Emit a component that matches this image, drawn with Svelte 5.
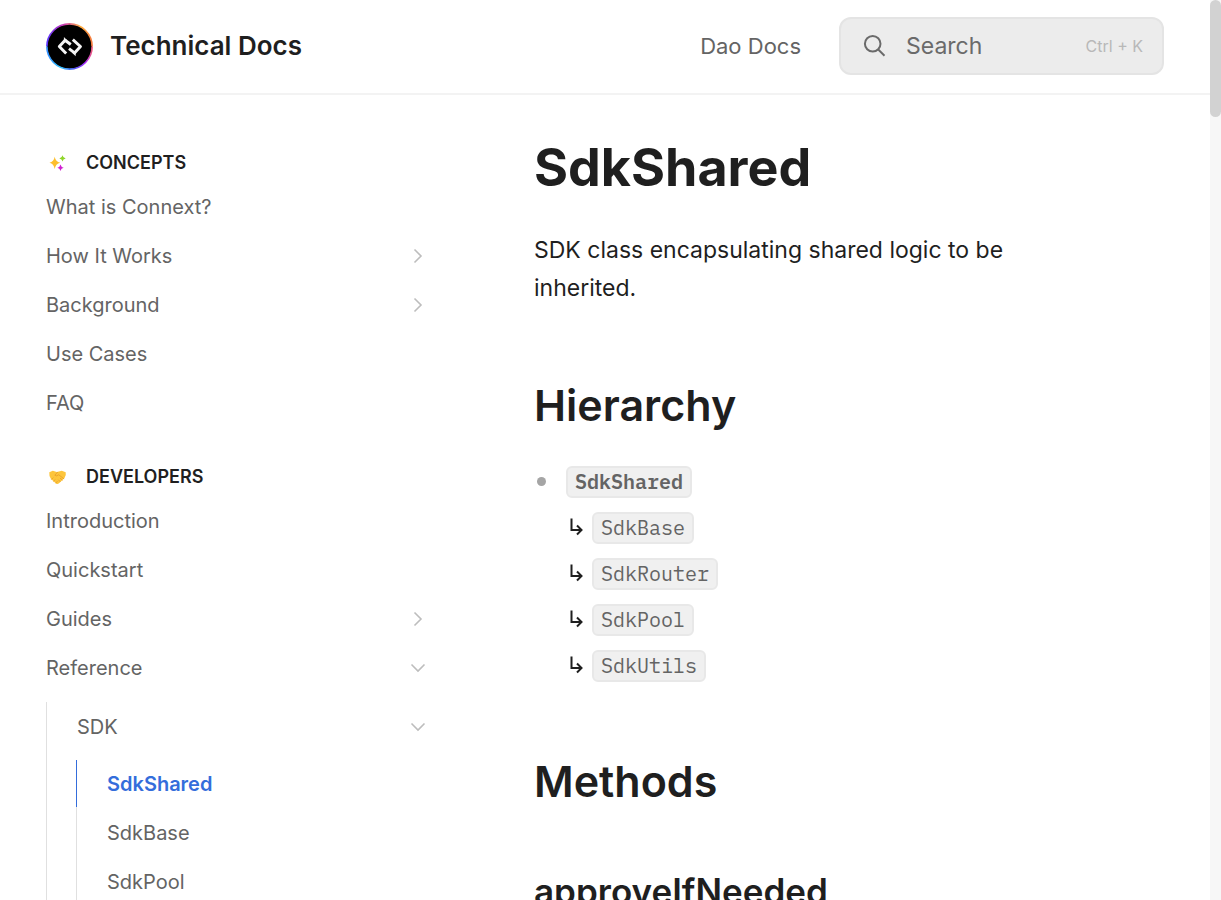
<script>
  const concepts = [
    { label: 'What is Connext?' },
    { label: 'How It Works', more: true },
    { label: 'Background', more: true },
    { label: 'Use Cases' },
    { label: 'FAQ' }
  ];
  const developers = [
    { label: 'Introduction' },
    { label: 'Quickstart' },
    { label: 'Guides', more: true },
    { label: 'Reference', more: true, open: true }
  ];
  const sdkPages = ['SdkShared', 'SdkBase', 'SdkPool'];
  const children = ['SdkBase', 'SdkRouter', 'SdkPool', 'SdkUtils'];
</script>

{#snippet chevron(open)}
  <svg class="chevron" class:open viewBox="0 0 20 20" aria-hidden="true">
    <path d="M6.5 3.5 13 10l-6.5 6.5" />
  </svg>
{/snippet}

{#snippet row(item)}
  <a class="row" href="#top">
    <span>{item.label}</span>
    {#if item.more}{@render chevron(item.open)}{/if}
  </a>
{/snippet}

<div class="page" id="top">
  <header>
    <a class="brand" href="#top">
      <svg class="logo" viewBox="0 0 48 48" aria-hidden="true">
        <defs>
          <linearGradient id="ring-top" x1="0" y1="0" x2="1" y2="0">
            <stop offset="0" stop-color="#5a35ff" />
            <stop offset=".35" stop-color="#c837b8" />
            <stop offset=".75" stop-color="#ffad3d" />
            <stop offset="1" stop-color="#f5793d" />
          </linearGradient>
          <linearGradient id="ring-bottom" x1="0" y1="0" x2="1" y2="0">
            <stop offset="0" stop-color="#318dff" />
            <stop offset=".3" stop-color="#35c5ff" />
            <stop offset=".6" stop-color="#4b59ee" />
            <stop offset=".85" stop-color="#a92cff" />
            <stop offset="1" stop-color="#ed5a78" />
          </linearGradient>
        </defs>
        <circle cx="24" cy="24" r="23" fill="#000" />
        <path d="M.9 24a23.1 23.1 0 0 1 46.2 0" fill="none" stroke="url(#ring-top)" stroke-width="1.7" />
        <path d="M.9 24a23.1 23.1 0 0 0 46.2 0" fill="none" stroke="url(#ring-bottom)" stroke-width="1.7" />
        <g fill="none" stroke="#f4f4f4" stroke-width="3" stroke-linejoin="round">
          <path d="M20.6 31.2 13.600 24l5.900-6.400 5.800 4.400" />
          <path d="M27.400 17 35.200 24l-6.100 6.600-5.600-4.400" />
        </g>
        <path d="M18.300 14.300 21.500 17.600 18.300 20.500ZM30.300 34 27 30.600 30.300 27.800Z" fill="#f4f4f4" />
      </svg>
      <span>Technical Docs</span>
    </a>
    <nav class="top-links" aria-label="Main"><a href="#top">Dao Docs</a></nav>
    <button class="search" type="button">
      <svg viewBox="0 0 24 24" aria-hidden="true">
        <circle cx="9.7" cy="9.7" r="7.8" /><path d="m15.500 15.700 6 6" />
      </svg>
      <span>Search</span>
      <kbd>Ctrl + K</kbd>
    </button>
  </header>

  <div class="body">
    <nav class="sidebar" aria-label="Pages">
      <section>
        <h2>
          <svg viewBox="0 0 20 20" aria-hidden="true">
            <path fill="#fdbf2d" d="M6.700 3.700Q7.600 8.800 12.200 9.800 7.600 10.900 6.700 16 5.800 10.900 1.500 9.800 5.800 8.800 6.700 3.700Z" />
            <path fill="#8fd62a" d="M14.500 2.200q.5 2.600 3.200 3.200-2.700.6-3.200 3.200-.5-2.600-3.200-3.200 2.700-.6 3.200-3.200Z" />
            <path fill="#cf1fd0" d="M12.500 11.500q.5 2.600 3.200 3.200-2.700.6-3.200 3.200-.5-2.600-3.200-3.200 2.700-.6 3.200-3.200Z" />
          </svg>
          CONCEPTS
        </h2>
        {#each concepts as item}{@render row(item)}{/each}
      </section>
      <section>
        <h2>
          <svg viewBox="0 0 20 20" aria-hidden="true">
            <path fill="#fdc53c" d="M1.300 5.200 4.800 3.800l4 1.200 5-1.200 3.900 1.400q.8 3.300-1.300 6L11 16.300q-1.500 1.300-3 .2L3 12Q.8 8.500 1.300 5.200Z" />
            <path fill="none" stroke="#e9a02c" stroke-width=".9" stroke-linecap="round" d="M9.500 5.300 6.800 8.200q1.700 1.500 4-.4l5 3.900M3.600 12.300l1.400-1.400M5.600 14.200l1.500-1.500M8 15.900l1.200-1.400M12.300 11.300l1.900 1.800M10.600 13l1.500 1.600" />
          </svg>
          DEVELOPERS
        </h2>
        {#each developers as item}{@render row(item)}{/each}
        <div class="branch">
          {@render row({ label: 'SDK', more: true, open: true })}
          <div class="leaves">
            {#each sdkPages as page, i}
              <a class="leaf" class:current={i === 0} href="#top">{page}</a>
            {/each}
          </div>
        </div>
      </section>
    </nav>

    <main>
      <h1>SdkShared</h1>
      <p class="lead">SDK class encapsulating shared logic to be inherited.</p>
      <h2>Hierarchy</h2>
      <ul>
        <li>
          <div class="entry"><code class="strong">SdkShared</code></div>
          {#each children as name}
            <div class="entry">
              <svg viewBox="0 0 20 24" aria-label="extended by" role="img">
                <path d="M5.500 2.500V14H15M11 9.500 15.500 14 11 18.500" />
              </svg>
              <code>{name}</code>
            </div>
          {/each}
        </li>
      </ul>
      <h2>Methods</h2>
      <h3>approveIfNeeded</h3>
    </main>
  </div>
  <div class="scroll-track" aria-hidden="true"><div class="scroll-thumb"></div></div>
</div>

<style>
  :global(body) { margin: 0; background: #fff; }
  * { box-sizing: border-box; }
  .page {
    height: 100vh;
    overflow: hidden;
    padding-right: 11px;
    color: #1f1f1f;
    font-family: Inter, "Liberation Sans", sans-serif;
  }
  a { color: inherit; text-decoration: none; }
  header {
    display: flex;
    align-items: center;
    padding: 17px 46px 18px;
    border-bottom: 2px solid #f3f3f3;
  }
  .brand {
    display: flex;
    align-items: center;
    gap: 17px;
    font-size: 26px;
    line-height: 36px;
    font-weight: 600;
  }
  .logo { width: 47px; height: 47px; }
  .top-links { margin-left: auto; margin-right: 38px; font-size: 22px; color: #646464; }
  .search {
    display: flex;
    align-items: center;
    width: 325px;
    height: 58px;
    padding: 0 19px 0 22px;
    border: 2px solid #e4e4e4;
    border-radius: 12px;
    background: #ececec;
    color: #6a6a6a;
    font: inherit;
    font-size: 23px;
  }
  .search svg { width: 24px; height: 24px; margin-right: 19px; fill: none; stroke: currentColor; stroke-width: 2; }
  kbd { margin-left: auto; font: inherit; font-size: 16px; color: #b8b8b8; }

  .body { display: flex; align-items: flex-start; }
  .sidebar { flex: 0 0 440px; padding: 49px 0 0 46px; }
  section { padding-bottom: 31px; }
  section h2 {
    display: flex;
    align-items: center;
    gap: 18px;
    margin: 0;
    height: 38px;
    font-size: 18px;
    line-height: 24px;
    font-weight: 600;
  }
  section h2 svg { width: 20px; height: 20px; margin-left: 2px; }
  .row, .leaf {
    display: flex;
    align-items: center;
    justify-content: space-between;
    height: 49px;
    padding-right: 12px;
    color: #646464;
    font-size: 20px;
    line-height: 28px;
  }
  .chevron { width: 20px; height: 20px; fill: none; stroke: #bdbdbd; stroke-width: 1.6; }
  .open { transform: rotate(90deg); }
  .branch { margin-top: 10px; padding-left: 30px; border-left: 1px solid #e0e0e0; }
  .leaves { display: grid; gap: 2px; margin: 9px 0 0 -1px; background: linear-gradient(#e0e0e0, #e0e0e0) left / 1px 100% no-repeat; }
  .leaf { height: 47px; padding-left: 30px; border-left: 1px solid #e0e0e0; }
  .leaf.current { border-left-color: #346ddb; color: #346ddb; font-weight: 600; }

  main { flex: 1; min-width: 0; padding: 39px 124px 0 94px; }
  h1 { margin: 0; font-size: 52px; line-height: 68px; font-weight: 700; }
  .lead { margin: 29px 0 0; padding-bottom: 6px; font-size: 23px; line-height: 38px; }
  main h2 { margin: 62px 0 0; font-size: 43px; line-height: 60px; font-weight: 600; }
  main h3 { margin: 50px 0 0; font-size: 35px; line-height: 60px; font-weight: 600; }
  ul { margin: 24px 0 0; padding: 0; list-style: none; }
  li { display: flex; flex-direction: column; position: relative; padding-left: 32px; }
  li::before {
    content: "";
    position: absolute;
    left: 3px;
    top: 18px;
    width: 9px;
    height: 9px;
    border-radius: 50%;
    background: #a5a5a5;
  }
  .entry { display: flex; align-items: center; height: 46px; }
  .entry svg { width: 20px; height: 24px; margin-right: 6px; fill: none; stroke: #1f1f1f; stroke-width: 2; }
  code {
    padding: 0 7px;
    border: 2px solid #e8e8e8;
    border-radius: 6px;
    background: #f0f0f0;
    color: #646464;
    font-family: "IBM Plex Mono", "Liberation Mono", monospace;
    font-size: 20px;
    line-height: 28px;
  }
  .strong { font-weight: 600; }

  .scroll-track { position: fixed; top: 0; right: 0; bottom: 0; width: 11px; background: #f7f7f7; }
  .scroll-thumb { height: 13%; border-radius: 6px; background: #d2d2d2; }
</style>
